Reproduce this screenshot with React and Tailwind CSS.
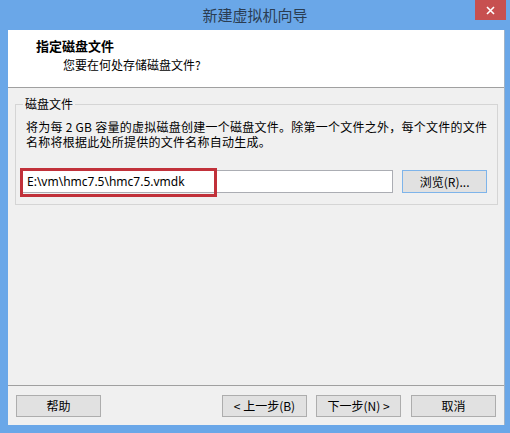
export default function App() {
  const btn =
    "h-[22px] w-[85px] flex items-center justify-center border border-[#adadad] bg-[#e1e1e1] text-[12px] text-black";
  return (
    <div className="w-[510px] h-[433px] bg-[#6aa7e8] flex flex-col font-['Noto_Sans','Noto_Sans_CJK_SC',sans-serif] overflow-hidden">
      <div className="h-[30px] relative flex items-center justify-center shrink-0">
        <span className="text-[15px] leading-none text-[#2a3d52] font-['Noto_Sans_CJK_SC',sans-serif] -mt-[1px]">
          新建虚拟机向导
        </span>
        <div className="absolute right-[4px] top-0 w-[31px] h-[20px] bg-[#c75050] flex items-center justify-center">
          <svg width="9" height="9" viewBox="0 0 9 9">
            <path d="M1 1 L8 8 M8 1 L1 8" stroke="#fff" strokeWidth="1.6" />
          </svg>
        </div>
      </div>
      <div className="ml-[8px] mr-[5px] h-[395px] bg-[#f0f0f0] flex flex-col border-r border-[#9fb3c8]">
        <div className="h-[58px] bg-white border-b border-[#a0a0a0] pl-[28px] pt-[7px] shrink-0 font-['Noto_Sans_CJK_SC',sans-serif]">
          <div className="text-[13px] leading-[18px] font-bold text-black">指定磁盘文件</div>
          <div className="text-[12px] leading-[18px] text-black pl-[27px] mt-[1px]">
            您要在何处存储磁盘文件?
          </div>
        </div>
        <div className="flex-1 px-[7px] pt-[8px]">
          <fieldset className="border border-[#d5d5d5] px-[6px] pb-[11px] pr-[10px]">
            <legend className="ml-[1px] px-[2px] text-[12px] leading-[16px] text-black font-['Noto_Sans_CJK_SC',sans-serif]">
              磁盘文件
            </legend>
            <div className="pl-[4px] pt-[7px] text-[12px] leading-[15px] text-black font-['Noto_Sans_CJK_SC',sans-serif] tracking-[0.25px] whitespace-nowrap">
              <div>将为每 2 GB 容量的虚拟磁盘创建一个磁盘文件。除第一个文件之外，每个文件的文件</div>
              <div>名称将根据此处所提供的文件名称自动生成。</div>
            </div>
            <div className="mt-[21px] flex items-center gap-[9px]">
              <div className="relative flex-1 h-[23px] bg-white border border-[#abadb3] flex items-center pl-[4px] text-[12px] text-black">
                E:\vm\hmc7.5\hmc7.5.vmdk
                <div className="absolute -left-[3px] -top-[3px] w-[197px] h-[29px] border-[3px] border-[#c1313a]" />
              </div>
              <div className="h-[23px] w-[85px] flex items-center justify-center border border-[#7eb4ea] bg-[#e1e1e1] text-[12px] text-black font-['Noto_Sans_CJK_SC',sans-serif]">
                浏览(R)...
              </div>
            </div>
          </fieldset>
        </div>
        <div className="h-[40px] border-t border-[#a0a0a0] flex items-start pt-[9px] px-[8px] shrink-0 font-['Noto_Sans_CJK_SC',sans-serif]">
          <div className={btn}>帮助</div>
          <div className="flex-1" />
          <div className={btn}>&lt; 上一步(B)</div>
          <div className={btn + " ml-[9px]"}>下一步(N) &gt;</div>
          <div className={btn + " ml-[10px]"}>取消</div>
        </div>
      </div>
    </div>
  );
}
